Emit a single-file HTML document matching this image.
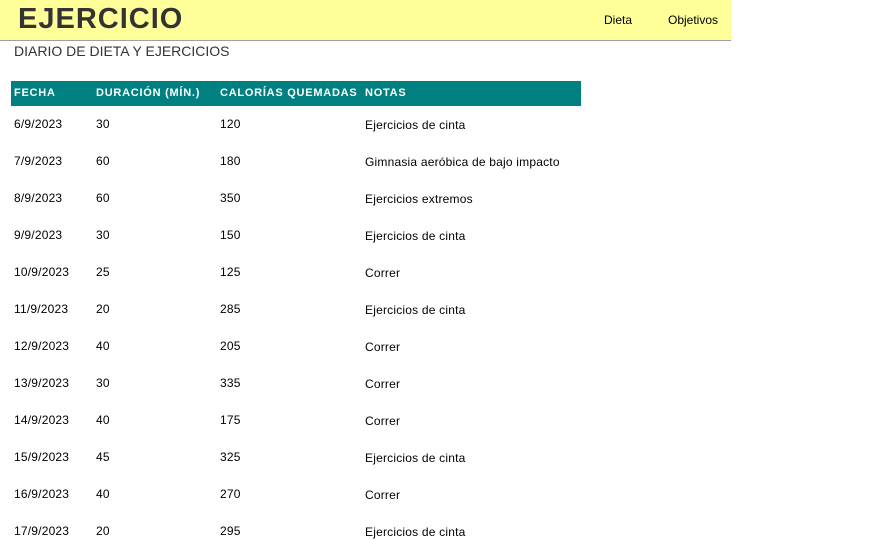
<!DOCTYPE html>
<html><head><meta charset="utf-8"><style>
body{margin:0;width:877px;height:539px;overflow:hidden;background:#fff;font-family:"Liberation Sans",Arial,sans-serif;color:#000}
.top{position:absolute;left:0;top:0;width:731px;height:40px;background:#ffff99;border-bottom:1px solid #a0a0a0}
.title{position:absolute;left:18px;top:3px;font-size:29px;font-weight:bold;color:#333;letter-spacing:1px}
.nav{position:absolute;top:13px;font-size:12px;color:#000}
.sub{position:absolute;left:14px;top:43px;font-size:14px;color:#333}
.hdr{position:absolute;left:11px;top:81px;width:570px;height:25px;background:#008080}
.hdr span{position:absolute;top:6px;font-size:11px;font-weight:bold;color:#fff;letter-spacing:0.75px}
.row{position:absolute;left:0;width:600px;font-size:12px;height:16px;letter-spacing:0.2px}
.row span{position:absolute;top:0}
</style></head><body>
<div class="top"><div class="title">EJERCICIO</div>
<div class="nav" style="left:604px">Dieta</div><div class="nav" style="left:668px">Objetivos</div></div>
<div class="sub">DIARIO DE DIETA Y EJERCICIOS</div>
<div class="hdr"><span style="left:3px">FECHA</span><span style="left:85px">DURACIÓN (MÍN.)</span><span style="left:209px">CALORÍAS QUEMADAS</span><span style="left:354px">NOTAS</span></div>
<div class="row" style="top:117px"><span style="left:14px">6/9/2023</span><span style="left:96px">30</span><span style="left:220px">120</span><span style="left:365px;top:1px">Ejercicios de cinta</span></div>
<div class="row" style="top:154px"><span style="left:14px">7/9/2023</span><span style="left:96px">60</span><span style="left:220px">180</span><span style="left:365px;top:1px">Gimnasia aeróbica de bajo impacto</span></div>
<div class="row" style="top:191px"><span style="left:14px">8/9/2023</span><span style="left:96px">60</span><span style="left:220px">350</span><span style="left:365px;top:1px">Ejercicios extremos</span></div>
<div class="row" style="top:228px"><span style="left:14px">9/9/2023</span><span style="left:96px">30</span><span style="left:220px">150</span><span style="left:365px;top:1px">Ejercicios de cinta</span></div>
<div class="row" style="top:265px"><span style="left:14px">10/9/2023</span><span style="left:96px">25</span><span style="left:220px">125</span><span style="left:365px;top:1px">Correr</span></div>
<div class="row" style="top:302px"><span style="left:14px">11/9/2023</span><span style="left:96px">20</span><span style="left:220px">285</span><span style="left:365px;top:1px">Ejercicios de cinta</span></div>
<div class="row" style="top:339px"><span style="left:14px">12/9/2023</span><span style="left:96px">40</span><span style="left:220px">205</span><span style="left:365px;top:1px">Correr</span></div>
<div class="row" style="top:376px"><span style="left:14px">13/9/2023</span><span style="left:96px">30</span><span style="left:220px">335</span><span style="left:365px;top:1px">Correr</span></div>
<div class="row" style="top:413px"><span style="left:14px">14/9/2023</span><span style="left:96px">40</span><span style="left:220px">175</span><span style="left:365px;top:1px">Correr</span></div>
<div class="row" style="top:450px"><span style="left:14px">15/9/2023</span><span style="left:96px">45</span><span style="left:220px">325</span><span style="left:365px;top:1px">Ejercicios de cinta</span></div>
<div class="row" style="top:487px"><span style="left:14px">16/9/2023</span><span style="left:96px">40</span><span style="left:220px">270</span><span style="left:365px;top:1px">Correr</span></div>
<div class="row" style="top:524px"><span style="left:14px">17/9/2023</span><span style="left:96px">20</span><span style="left:220px">295</span><span style="left:365px;top:1px">Ejercicios de cinta</span></div>
</body></html>
